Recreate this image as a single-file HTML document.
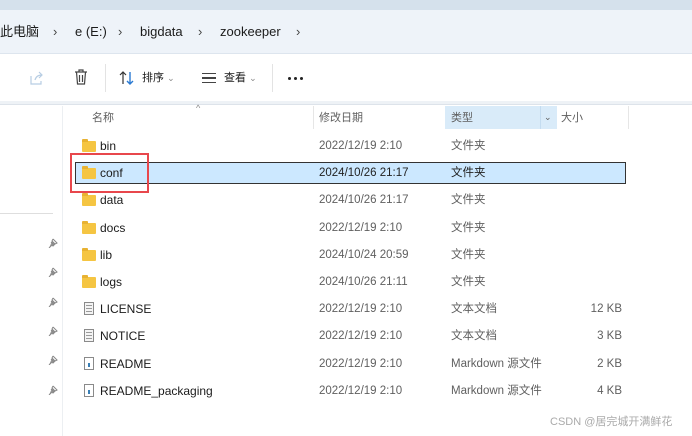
<!DOCTYPE html>
<html><head><meta charset="utf-8"><style>
*{margin:0;padding:0;box-sizing:border-box}
body{width:692px;height:436px;overflow:hidden;background:#fff;font-family:"Liberation Sans","Noto Sans CJK SC",sans-serif;color:#1b1b1b;position:relative}
.a{position:absolute;white-space:nowrap;line-height:14px}
.top{left:0;top:0;width:692px;height:10px;background:#d5e1ec}
.addr{left:0;top:10px;width:692px;height:44px;background:#eef3f9;border-bottom:1px solid #dde5ee}
.addr span{position:absolute;top:14px;font-size:13px;line-height:15px;color:#1b1b1b}
.row{font-size:12px}
.gray{color:#5f5f5f;font-size:11.5px}
.fold{position:absolute;width:14px;height:11px;background:#f5c542;border-radius:1px}
.fold:before{content:"";position:absolute;left:0;top:-2px;width:6px;height:3px;background:#e8b232;border-radius:1px 1px 0 0}
.doc{position:absolute;width:10px;height:13px;border:1px solid #8a8a8a;background:#f4f4f4}
.doc i{position:absolute;left:1px;right:1px;height:1px;background:#9a9a9a}
.pin{position:absolute;left:48px}
</style></head><body>
<div class="a top"></div>
<div class="a addr">
<span style="left:0">此电脑</span><span style="left:53px;color:#444">›</span>
<span style="left:75px">e (E:)</span><span style="left:118px;color:#444">›</span>
<span style="left:140px">bigdata</span><span style="left:198px;color:#444">›</span>
<span style="left:220px">zookeeper</span><span style="left:296px;color:#444">›</span>
</div>
<!-- toolbar -->
<svg class="a" style="left:28px;top:70px" width="16" height="16" viewBox="0 0 16 16"><path d="M3 6v8h10v-3M7 10c1-4 4-5 7-5M11 2l3 3-3 3" fill="none" stroke="#b7cde3" stroke-width="1.2"/></svg>
<svg class="a" style="left:73px;top:69px" width="16" height="17" viewBox="0 0 16 17"><path d="M2 3h12M6 3V1h4v2M3.5 3l1 12h7l1-12M6.5 6v7M9.5 6v7" fill="none" stroke="#444" stroke-width="1.2"/></svg>
<div class="a" style="left:105px;top:64px;width:1px;height:28px;background:#e3e3e3"></div>
<svg class="a" style="left:119px;top:71px" width="16" height="14" viewBox="0 0 16 14"><path d="M4 13V1M1 4l3-3 3 3" fill="none" stroke="#333" stroke-width="1.2"/><path d="M11 1v12M8 10l3 3 3-3" fill="none" stroke="#2a7ad2" stroke-width="1.4"/></svg>
<div class="a" style="left:142px;top:71px;font-size:11px">排序 <span style="color:#888;font-size:9px">⌄</span></div>
<div class="a" style="left:202px;top:73px;width:14px;height:10px;border-top:1.5px solid #444;border-bottom:1.5px solid #444"><div style="margin-top:3px;height:1.5px;background:#444"></div></div>
<div class="a" style="left:224px;top:71px;font-size:11px">查看 <span style="color:#888;font-size:9px">⌄</span></div>
<div class="a" style="left:272px;top:64px;width:1px;height:28px;background:#e3e3e3"></div>
<div class="a" style="left:288px;top:77px;width:3px;height:3px;background:#222;border-radius:50%"></div>
<div class="a" style="left:294px;top:77px;width:3px;height:3px;background:#222;border-radius:50%"></div>
<div class="a" style="left:300px;top:77px;width:3px;height:3px;background:#222;border-radius:50%"></div>
<div class="a" style="left:0;top:101px;width:692px;height:4px;background:#eef2f6;border-bottom:1px solid #dde3ea"></div>
<!-- left pane -->
<div class="a" style="left:62px;top:106px;width:1px;height:330px;background:#eceff2"></div>
<div class="a" style="left:0;top:213px;width:53px;height:1px;background:#dedede"></div>
<svg class="pin" style="top:238px" width="10" height="10" viewBox="0 0 10 10"><path d="M5 1l4 4-2 1-2 2-1-1-3 3M3 4l3 3M5 1l-1 2 3 3 2-1" fill="#999" stroke="#888" stroke-width="1"/></svg>
<svg class="pin" style="top:267px" width="10" height="10" viewBox="0 0 10 10"><path d="M5 1l4 4-2 1-2 2-1-1-3 3M3 4l3 3M5 1l-1 2 3 3 2-1" fill="#999" stroke="#888" stroke-width="1"/></svg>
<svg class="pin" style="top:297px" width="10" height="10" viewBox="0 0 10 10"><path d="M5 1l4 4-2 1-2 2-1-1-3 3M3 4l3 3M5 1l-1 2 3 3 2-1" fill="#999" stroke="#888" stroke-width="1"/></svg>
<svg class="pin" style="top:326px" width="10" height="10" viewBox="0 0 10 10"><path d="M5 1l4 4-2 1-2 2-1-1-3 3M3 4l3 3M5 1l-1 2 3 3 2-1" fill="#999" stroke="#888" stroke-width="1"/></svg>
<svg class="pin" style="top:355px" width="10" height="10" viewBox="0 0 10 10"><path d="M5 1l4 4-2 1-2 2-1-1-3 3M3 4l3 3M5 1l-1 2 3 3 2-1" fill="#999" stroke="#888" stroke-width="1"/></svg>
<svg class="pin" style="top:385px" width="10" height="10" viewBox="0 0 10 10"><path d="M5 1l4 4-2 1-2 2-1-1-3 3M3 4l3 3M5 1l-1 2 3 3 2-1" fill="#999" stroke="#888" stroke-width="1"/></svg>
<!-- header -->
<div class="a" style="left:445px;top:106px;width:112px;height:23px;background:#d9ebf9"></div>
<div class="a" style="left:540px;top:106px;width:1px;height:23px;background:#c4dcf0"></div>
<div class="a" style="left:313px;top:106px;width:1px;height:23px;background:#e6e6e6"></div>
<div class="a" style="left:628px;top:106px;width:1px;height:23px;background:#e6e6e6"></div>
<div class="a" style="left:196px;top:101px;font-size:9px;color:#888">^</div>
<div class="a gray" style="left:92px;top:111px;font-size:11px">名称</div>
<div class="a gray" style="left:319px;top:111px;font-size:11px">修改日期</div>
<div class="a gray" style="left:451px;top:111px;font-size:11px">类型</div>
<div class="a gray" style="left:544px;top:110px;font-size:9px">⌄</div>
<div class="a gray" style="left:561px;top:111px;font-size:11px">大小</div>
<!-- selected -->
<div class="a" style="left:75px;top:162px;width:551px;height:22px;background:#cce8ff;border:1px solid #333"></div>
<div class="a" style="left:70px;top:153px;width:79px;height:40px;border:2px solid #e8474c"></div>
<!-- rows -->
<div class="fold" style="left:82px;top:141px"></div><div class="a row" style="left:100px;top:139px">bin</div><div class="a gray" style="left:319px;top:139px">2022/12/19 2:10</div><div class="a gray" style="left:451px;top:139px">文件夹</div>
<div class="fold" style="left:82px;top:168px"></div><div class="a row" style="left:100px;top:166px">conf</div><div class="a gray" style="left:319px;top:166px;color:#222">2024/10/26 21:17</div><div class="a gray" style="left:451px;top:166px;color:#222">文件夹</div>
<div class="fold" style="left:82px;top:195px"></div><div class="a row" style="left:100px;top:193px">data</div><div class="a gray" style="left:319px;top:193px">2024/10/26 21:17</div><div class="a gray" style="left:451px;top:193px">文件夹</div>
<div class="fold" style="left:82px;top:223px"></div><div class="a row" style="left:100px;top:221px">docs</div><div class="a gray" style="left:319px;top:221px">2022/12/19 2:10</div><div class="a gray" style="left:451px;top:221px">文件夹</div>
<div class="fold" style="left:82px;top:250px"></div><div class="a row" style="left:100px;top:248px">lib</div><div class="a gray" style="left:319px;top:248px">2024/10/24 20:59</div><div class="a gray" style="left:451px;top:248px">文件夹</div>
<div class="fold" style="left:82px;top:277px"></div><div class="a row" style="left:100px;top:275px">logs</div><div class="a gray" style="left:319px;top:275px">2024/10/26 21:11</div><div class="a gray" style="left:451px;top:275px">文件夹</div>
<div class="doc" style="left:84px;top:302px"><i style="top:2px"></i><i style="top:5px"></i><i style="top:8px"></i></div><div class="a row" style="left:100px;top:302px">LICENSE</div><div class="a gray" style="left:319px;top:302px">2022/12/19 2:10</div><div class="a gray" style="left:451px;top:302px">文本文档</div><div class="a gray" style="left:560px;top:302px;width:62px;text-align:right">12 KB</div>
<div class="doc" style="left:84px;top:329px"><i style="top:2px"></i><i style="top:5px"></i><i style="top:8px"></i></div><div class="a row" style="left:100px;top:329px">NOTICE</div><div class="a gray" style="left:319px;top:329px">2022/12/19 2:10</div><div class="a gray" style="left:451px;top:329px">文本文档</div><div class="a gray" style="left:560px;top:329px;width:62px;text-align:right">3 KB</div>
<div class="doc" style="left:84px;top:357px;background:#fff"><i style="top:5px;left:3px;right:3px;height:4px;background:#3a7fb5"></i></div><div class="a row" style="left:100px;top:357px">README</div><div class="a gray" style="left:319px;top:357px">2022/12/19 2:10</div><div class="a gray" style="left:451px;top:357px">Markdown 源文件</div><div class="a gray" style="left:560px;top:357px;width:62px;text-align:right">2 KB</div>
<div class="doc" style="left:84px;top:384px;background:#fff"><i style="top:5px;left:3px;right:3px;height:4px;background:#3a7fb5"></i></div><div class="a row" style="left:100px;top:384px">README_packaging</div><div class="a gray" style="left:319px;top:384px">2022/12/19 2:10</div><div class="a gray" style="left:451px;top:384px">Markdown 源文件</div><div class="a gray" style="left:560px;top:384px;width:62px;text-align:right">4 KB</div>
<div class="a" style="left:550px;top:415px;font-size:11px;color:#aaa">CSDN @居完城开满鲜花</div>
</body></html>
